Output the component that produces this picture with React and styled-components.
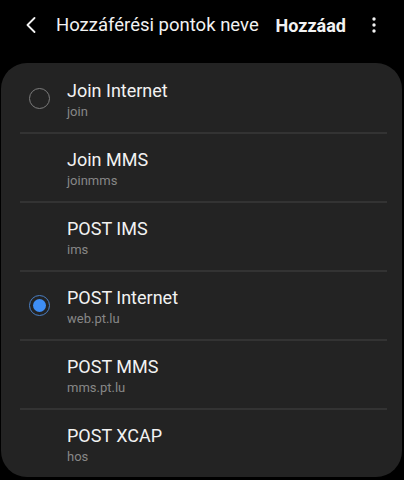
import React from "react";
import styled, { createGlobalStyle } from "styled-components";

const Global = createGlobalStyle`
  html, body { margin: 0; padding: 0; background: #000; }
  body { font-family: Roboto, "Noto Sans", sans-serif; color: #f2f2f2; -webkit-font-smoothing: antialiased; }
`;

const Page = styled.div`
  width: 404px;
  height: 480px;
  background: #000;
  overflow: hidden;
`;

const Header = styled.header`
  height: 50px;
  display: flex;
  align-items: center;
  padding: 0 28px 0 26px;
`;

const IconBtn = styled.span`
  display: flex;
  align-items: center;
  justify-content: center;
  color: #f2f2f2;
`;

const Title = styled.h1`
  margin: 0 0 0 20px;
  font-size: 18.5px;
  font-weight: 400;
  color: #f2f2f2;
  flex: 1;
  white-space: nowrap;
`;

const Action = styled.span`
  font-size: 18px;
  font-weight: 700;
  color: #f2f2f2;
  margin-right: 26px;
`;

const Card = styled.div`
  margin: 13px 2px 0 1px;
  padding-top: 2px;
  background: #232323;
  border-radius: 26px;
  overflow: hidden;
`;

const Row = styled.div`
  height: 67px;
  display: flex;
  align-items: center;
  padding-left: 28px;
  gap: 17px;
`;

const Divider = styled.div`
  height: 2px;
  margin: 0 15px 0 19px;
  background: #333333;
`;

const RadioSlot = styled.span`
  width: 21px;
  height: 21px;
  flex: none;
  box-sizing: border-box;
  border-radius: 50%;
  display: flex;
  align-items: center;
  justify-content: center;
  border: ${(p) => (p.$hidden ? "none" : p.$checked ? "1.5px solid #4a7fc4" : "1.5px solid #7d7d7d")};
`;

const Dot = styled.span`
  width: 13px;
  height: 13px;
  border-radius: 50%;
  background: #3e8ef5;
`;

const Texts = styled.div`
  display: flex;
  flex-direction: column;
  padding-top: 2px;
`;

const Name = styled.span`
  font-size: 18px;
  line-height: 22px;
  color: #f2f2f2;
`;

const Sub = styled.span`
  font-size: 13px;
  line-height: 17px;
  margin-top: 1px;
  color: #878787;
`;

const items = [
  { name: "Join Internet", sub: "join", radio: "off" },
  { name: "Join MMS", sub: "joinmms", radio: "none" },
  { name: "POST IMS", sub: "ims", radio: "none" },
  { name: "POST Internet", sub: "web.pt.lu", radio: "on" },
  { name: "POST MMS", sub: "mms.pt.lu", radio: "none" },
  { name: "POST XCAP", sub: "hos", radio: "none" },
];

export default function App() {
  return (
    <Page>
      <Global />
      <Header>
        <IconBtn>
          <svg width="10" height="16" viewBox="0 0 10 16" fill="none">
            <path d="M8.5 1 L1.5 8 L8.5 15" stroke="#f2f2f2" strokeWidth="1.8" strokeLinecap="round" strokeLinejoin="round" />
          </svg>
        </IconBtn>
        <Title>Hozzáférési pontok neve</Title>
        <Action>Hozzáad</Action>
        <IconBtn>
          <svg width="4" height="16" viewBox="0 0 4 16">
            <circle cx="2" cy="2" r="1.7" fill="#f2f2f2" />
            <circle cx="2" cy="8" r="1.7" fill="#f2f2f2" />
            <circle cx="2" cy="14" r="1.7" fill="#f2f2f2" />
          </svg>
        </IconBtn>
      </Header>
      <Card>
        {items.map((it, i) => (
          <React.Fragment key={it.name}>
            {i > 0 && <Divider />}
            <Row>
              <RadioSlot $hidden={it.radio === "none"} $checked={it.radio === "on"}>
                {it.radio === "on" && <Dot />}
              </RadioSlot>
              <Texts>
                <Name>{it.name}</Name>
                <Sub>{it.sub}</Sub>
              </Texts>
            </Row>
          </React.Fragment>
        ))}
      </Card>
    </Page>
  );
}
